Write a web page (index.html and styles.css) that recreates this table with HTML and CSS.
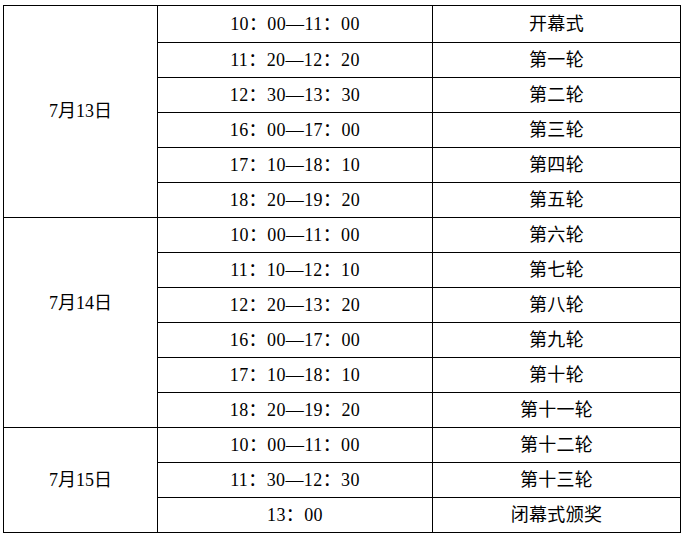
FILE: index.html
```html
<!DOCTYPE html>
<html lang="zh">
<head>
<meta charset="utf-8">
<title>赛程表</title>
<link rel="stylesheet" href="styles.css">
</head>
<body>
<div class="page">
<table class="schedule">
  <colgroup>
    <col class="c-date">
    <col class="c-time">
    <col class="c-round">
  </colgroup>
  <tbody>
    <tr class="first"><td class="date" rowspan="6">7月13日</td><td class="time">10：00—11：00</td><td class="round">开幕式</td></tr>
    <tr><td class="time">11：20—12：20</td><td class="round">第一轮</td></tr>
    <tr><td class="time">12：30—13：30</td><td class="round">第二轮</td></tr>
    <tr><td class="time">16：00—17：00</td><td class="round">第三轮</td></tr>
    <tr><td class="time">17：10—18：10</td><td class="round">第四轮</td></tr>
    <tr><td class="time">18：20—19：20</td><td class="round">第五轮</td></tr>
    <tr><td class="date date-raised" rowspan="6">7月14日</td><td class="time">10：00—11：00</td><td class="round">第六轮</td></tr>
    <tr><td class="time">11：10—12：10</td><td class="round">第七轮</td></tr>
    <tr><td class="time">12：20—13：20</td><td class="round">第八轮</td></tr>
    <tr><td class="time">16：00—17：00</td><td class="round">第九轮</td></tr>
    <tr><td class="time">17：10—18：10</td><td class="round">第十轮</td></tr>
    <tr><td class="time">18：20—19：20</td><td class="round">第十一轮</td></tr>
    <tr><td class="date" rowspan="3">7月15日</td><td class="time">10：00—11：00</td><td class="round">第十二轮</td></tr>
    <tr><td class="time">11：30—12：30</td><td class="round">第十三轮</td></tr>
    <tr><td class="time">13：00</td><td class="round">闭幕式颁奖</td></tr>
  </tbody>
</table>
</div>
</body>
</html>
```
FILE: styles.css
```css
html, body {
  margin: 0;
  padding: 0;
  background: #ffffff;
}

.page {
  padding: 5px 0 0 3px;
}

.schedule {
  border-collapse: collapse;
  table-layout: fixed;
  width: 677px;
  font-family: "Liberation Serif", "Noto Sans CJK SC", serif;
  font-size: 18px;
  color: #000;
}

.c-date { width: 154px; }
.c-time { width: 275px; }
.c-round { width: 248px; }

.schedule tr {
  height: 35px;
}

.schedule tr.first {
  height: 36.5px;
}

.schedule td {
  border: 1px solid #000;
  padding: 0;
  text-align: center;
  vertical-align: middle;
  line-height: 20px;
}

.schedule td.date-raised {
  padding-bottom: 38px;
}

.time {
  letter-spacing: 0.4px;
}

.round {
  letter-spacing: 0.3px;
}
```
